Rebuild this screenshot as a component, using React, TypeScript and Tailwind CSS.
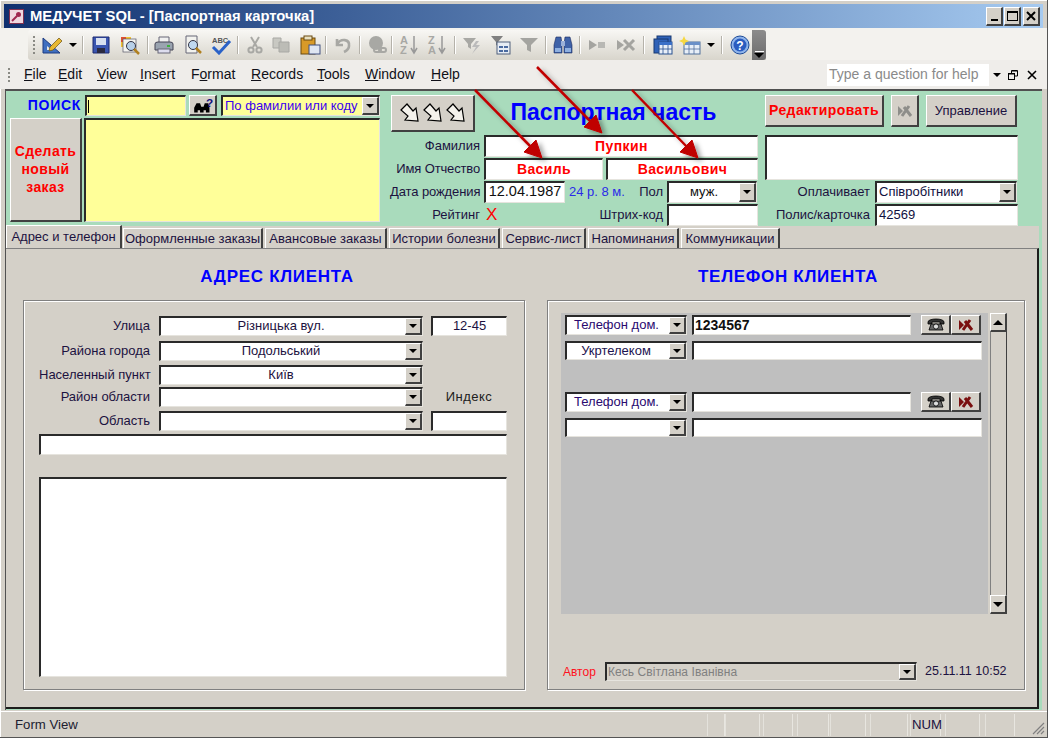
import React from "react";

const sunken =
  "border-t-2 border-l-2 border-r border-b border-t-[#2a2a2a] border-l-[#2a2a2a] border-r-[#e6e4de] border-b-[#e6e4de]";
const raised =
  "border-t border-l border-b-2 border-r-2 border-t-white border-l-white border-b-[#404040] border-r-[#404040] bg-[#d4d0c8]";
const etched = "border border-[#808080] shadow-[inset_1px_1px_0_#ffffff,1px_1px_0_#ffffff]";
const G = "#a8a8a4";

function Drop() {
  return (
    <div className={`${raised} w-[17px] shrink-0 self-stretch flex items-center justify-center`}>
      <div className="w-0 h-0 border-l-[4px] border-r-[4px] border-t-[4px] border-l-transparent border-r-transparent border-t-black" />
    </div>
  );
}

function Combo({ w, text, cls = "", bg = "bg-white", left = false }: { w: string; text?: string; cls?: string; bg?: string; left?: boolean }) {
  return (
    <div className={`${sunken} ${w} ${bg} h-full flex shrink-0`}>
      <div className={`flex-1 min-w-0 flex items-center whitespace-nowrap pb-[1px] ${left ? "pl-[2px]" : "justify-center"} ${cls}`}>{text}</div>
      <Drop />
    </div>
  );
}

function Field({ w, text, cls = "", left = false }: { w: string; text?: string; cls?: string; left?: boolean }) {
  return (
    <div className={`${sunken} ${w} bg-white h-full flex items-center shrink-0 whitespace-nowrap pb-[1px] ${left ? "pl-[1px]" : "justify-center"} ${cls}`}>{text}</div>
  );
}

function Label({ w, text, cls = "" }: { w: string; text: string; cls?: string }) {
  return <div className={`${w} text-right shrink-0 whitespace-nowrap text-[#1c1240] ${cls}`}>{text}</div>;
}

function DelIcon({ color }: { color: string }) {
  return (
    <svg width="16" height="14" viewBox="0 0 16 14">
      <path d="M1 2 L6 7 L1 12 Z" fill={color} />
      <path d="M5 12 L12 2 M7 3 L14 12" stroke={color} strokeWidth="3" fill="none" />
    </svg>
  );
}

function PhoneIcon() {
  return (
    <svg width="18" height="15" viewBox="0 0 18 15">
      <path d="M1 5 C1 1 17 1 17 5 L17 7 L13 7 L13 5 L5 5 L5 7 L1 7 Z" fill="#333" stroke="#000" strokeWidth="0.8" />
      <path d="M4 7 L14 7 L16 13 L2 13 Z" fill="#666" stroke="#000" strokeWidth="0.8" />
      <circle cx="9" cy="9.5" r="2.6" fill="#ddd" stroke="#000" strokeWidth="0.8" />
    </svg>
  );
}

function BlockArrow() {
  return (
    <svg width="20" height="20" viewBox="0 0 20 20">
      <path d="M1 7 L7 1 L13 8 L16 5 L18 18 L5 17 L8 13 Z" fill="#f4f2ec" stroke="#000" strokeWidth="1.2" />
    </svg>
  );
}

function Sep() {
  return <div className="w-[1px] h-[18px] bg-[#b5b2aa] shadow-[1px_0_0_#ffffff] shrink-0" />;
}

function Ic({ w, children }: { w: string; children: React.ReactNode }) {
  return <div className={`${w} shrink-0 flex items-center justify-center`}>{children}</div>;
}

const S = ({ children, w = 20 }: { children: React.ReactNode; w?: number }) => (
  <svg width={w} height="20" viewBox={`0 0 ${w} 20`}>{children}</svg>
);

const SmallDown = () => <div className="w-0 h-0 border-l-[4px] border-r-[4px] border-t-[4px] border-l-transparent border-r-transparent border-t-black" />;

function Toolbar() {
  return (
    <div className="ml-[28px] mt-[2px] h-[30px] w-[738px] flex rounded-l-[3px] bg-gradient-to-b from-[#f8f7f4] to-[#d8d5cc]">
      <div className="flex-1 flex items-center">
        <div className="ml-[5px] w-[2px] h-[18px] border-l-2 border-dotted border-[#8a8a84] shrink-0" />
        <Ic w="ml-[6px] w-[22px]"><S w={22}>
          <path d="M2 3 L2 18 L19 18 Z" fill="#3f6fc0" stroke="#1c3a80" /><path d="M6 11 L6 15 L11 15 Z" fill="#e8e8e4" />
          <path d="M9 12 L18 3 L21 6 L12 15 L8 16 Z" fill="#e8b830" stroke="#6a5010" strokeWidth="0.7" />
        </S></Ic>
        <Ic w="ml-[5px] w-[10px]"><SmallDown /></Ic>
        <div className="ml-[4px]"><Sep /></div>
        <Ic w="ml-[8px] w-[20px]"><S>
          <path d="M2 2 L18 2 L18 18 L2 18 Z" fill="#3a55b0" stroke="#1c2a70" /><rect x="5" y="3" width="10" height="7" fill="#d8e0f0" /><rect x="6" y="13" width="8" height="5" fill="#2a2a40" />
        </S></Ic>
        <Ic w="ml-[8px] w-[22px]"><S w={22}>
          <rect x="2" y="2" width="5" height="5" fill="#e05030" /><rect x="7" y="2" width="5" height="5" fill="#f0c030" /><rect x="2" y="7" width="5" height="5" fill="#f0c030" />
          <rect x="4" y="4" width="13" height="13" fill="#f4f4f0" stroke="#556" strokeWidth="0.7" /><circle cx="12" cy="11" r="4.5" fill="#b8d0e8" stroke="#334" /><path d="M15 14 L20 19" stroke="#b08020" strokeWidth="2.5" />
        </S></Ic>
        <div className="ml-[6px]"><Sep /></div>
        <Ic w="ml-[6px] w-[20px]"><S>
          <path d="M5 2 L15 2 L15 8 L5 8 Z" fill="#f0f0f0" stroke="#667" /><path d="M1 9 Q1 7 4 7 L16 7 Q19 7 19 9 L19 15 L1 15 Z" fill="#9aa4b0" stroke="#445" /><rect x="4" y="14" width="12" height="4" fill="#dde" stroke="#667" /><rect x="13" y="10" width="3" height="2" fill="#40b040" />
        </S></Ic>
        <Ic w="ml-[9px] w-[20px]"><S>
          <path d="M3 1 L14 1 L14 18 L3 18 Z" fill="#f2f2ee" stroke="#667" /><circle cx="10" cy="10" r="4.5" fill="#c0d8f0" stroke="#334" /><path d="M13 13 L18 18" stroke="#b08020" strokeWidth="2.5" />
        </S></Ic>
        <Ic w="ml-[7px] w-[22px]"><svg width="22" height="20" viewBox="0 0 22 20">
          <text x="2" y="8" fontSize="7.5" fontWeight="700" fill="#555" fontFamily="Liberation Sans, Arial, sans-serif">ABC</text>
          <path d="M3 12 L9 18 L20 6" fill="none" stroke="#2a62c8" strokeWidth="3" />
        </svg></Ic>
        <div className="ml-[5px]"><Sep /></div>
        <Ic w="ml-[8px] w-[18px]"><S w={18}>
          <path d="M5 2 L11 12 M13 2 L7 12" stroke={G} strokeWidth="2" /><circle cx="5" cy="15" r="2.6" fill="none" stroke={G} strokeWidth="2" /><circle cx="13" cy="15" r="2.6" fill="none" stroke={G} strokeWidth="2" />
        </S></Ic>
        <Ic w="ml-[7px] w-[20px]"><S>
          <path d="M2 3 L10 3 L10 13 L2 13 Z" fill="#c8c8c2" stroke={G} /><path d="M8 7 L18 7 L18 17 L8 17 Z" fill="#bcbcb6" stroke={G} />
        </S></Ic>
        <Ic w="ml-[8px] w-[22px]"><S w={22}>
          <rect x="2" y="3" width="14" height="16" fill="#d89a28" stroke="#6a4a10" /><rect x="5" y="1" width="8" height="4" fill="#e8e0c0" stroke="#6a4a10" /><rect x="10" y="10" width="11" height="9" fill="#dfe6f2" stroke="#405080" />
        </S></Ic>
        <div className="ml-[4px]"><Sep /></div>
        <Ic w="ml-[7px] w-[20px]"><S>
          <path d="M4 4 L4 10 L10 10 M4 9 C8 3 17 4 16 11 C16 14 13 16 11 17" fill="none" stroke={G} strokeWidth="2.6" />
        </S></Ic>
        <div className="ml-[6px]"><Sep /></div>
        <Ic w="ml-[6px] w-[22px]"><S w={22}>
          <circle cx="10" cy="8" r="7" fill={G} /><rect x="8" y="13" width="7" height="4" rx="2" fill="none" stroke={G} strokeWidth="2" /><rect x="13" y="13" width="7" height="4" rx="2" fill="none" stroke={G} strokeWidth="2" />
        </S></Ic>
        <div className="ml-[3px]"><Sep /></div>
        <Ic w="ml-[7px] w-[20px]"><svg width="20" height="22" viewBox="0 0 20 22">
          <text x="1" y="10" fontSize="11" fontWeight="700" fill={G} fontFamily="Liberation Sans, Arial, sans-serif">A</text>
          <text x="1" y="20" fontSize="11" fontWeight="700" fill={G} fontFamily="Liberation Sans, Arial, sans-serif">Z</text>
          <path d="M15 2 L15 18 M12 14 L15 19 L18 14" stroke="#999" strokeWidth="1.5" fill="none" />
        </svg></Ic>
        <Ic w="ml-[8px] w-[20px]"><svg width="20" height="22" viewBox="0 0 20 22">
          <text x="1" y="10" fontSize="11" fontWeight="700" fill={G} fontFamily="Liberation Sans, Arial, sans-serif">Z</text>
          <text x="1" y="20" fontSize="11" fontWeight="700" fill={G} fontFamily="Liberation Sans, Arial, sans-serif">A</text>
          <path d="M15 2 L15 18 M12 14 L15 19 L18 14" stroke="#999" strokeWidth="1.5" fill="none" />
        </svg></Ic>
        <div className="ml-[7px]"><Sep /></div>
        <Ic w="ml-[7px] w-[20px]"><S>
          <path d="M1 3 L14 3 L9 9 L9 14 L6 12 L6 9 Z" fill={G} /><path d="M14 6 L10 12 L14 12 L10 19 L18 10 L14 10 L17 6 Z" fill="#bbb" />
        </S></Ic>
        <Ic w="ml-[8px] w-[22px]"><S w={22}>
          <path d="M1 1 L13 1 L8 7 L8 11 L6 10 L6 7 Z" fill="#808080" /><rect x="7" y="7" width="13" height="12" fill="#e6ecf4" stroke="#50607c" /><rect x="9" y="11" width="4" height="2" fill="#4a6aa0" /><rect x="14" y="11" width="4" height="2" fill="#4a6aa0" /><rect x="9" y="15" width="4" height="2" fill="#4a6aa0" /><rect x="14" y="15" width="4" height="2" fill="#4a6aa0" />
        </S></Ic>
        <Ic w="ml-[7px] w-[20px]"><S>
          <path d="M1 3 L19 3 L12 10 L12 17 L8 15 L8 10 Z" fill="#a4a4a0" />
        </S></Ic>
        <div className="ml-[6px]"><Sep /></div>
        <Ic w="ml-[7px] w-[20px]"><S>
          <path d="M3 2 L8 2 L9 9 L9 18 L1 18 L1 10 Z" fill="#3f62a8" stroke="#1c2c60" strokeWidth="0.6" /><path d="M17 2 L12 2 L11 9 L11 18 L19 18 L19 10 Z" fill="#3f62a8" stroke="#1c2c60" strokeWidth="0.6" /><rect x="8" y="6" width="4" height="5" fill="#9ab0d8" /><rect x="2" y="13" width="6" height="4" fill="#8fb0e0" /><rect x="12" y="13" width="6" height="4" fill="#8fb0e0" />
        </S></Ic>
        <div className="ml-[6px]"><Sep /></div>
        <Ic w="ml-[7px] w-[20px]"><S>
          <path d="M2 5 L10 10 L2 15 Z" fill="#a4a4a0" /><rect x="11" y="7" width="7" height="6" fill="#b8b8b4" />
        </S></Ic>
        <Ic w="ml-[8px] w-[22px]"><S w={22}>
          <path d="M2 5 L9 10 L2 15 Z" fill="#a4a4a0" /><path d="M9 5 L19 15 M19 5 L9 15" stroke="#a4a4a0" strokeWidth="3" />
        </S></Ic>
        <div className="ml-[6px]"><Sep /></div>
        <Ic w="ml-[7px] w-[22px]"><S w={22}>
          <rect x="6" y="1" width="14" height="14" fill="#2f62b8" stroke="#183870" /><rect x="3" y="4" width="14" height="14" fill="#2f62b8" stroke="#183870" /><rect x="8" y="7" width="13" height="12" fill="#e8eff8" stroke="#285090" /><rect x="8" y="7" width="13" height="3" fill="#3a70c8" /><path d="M12 10 L12 19 M17 10 L17 19 M8 14 L21 14" stroke="#285090" strokeWidth="0.8" />
        </S></Ic>
        <Ic w="ml-[6px] w-[22px]"><S w={22}>
          <rect x="5" y="7" width="16" height="12" fill="#e8eff8" stroke="#50709c" /><rect x="5" y="7" width="16" height="3" fill="#6a90c8" /><path d="M10 10 L10 19 M15 10 L15 19 M5 14 L21 14" stroke="#50709c" strokeWidth="0.8" /><path d="M5 1 L6.5 4.5 L10 6 L6.5 7.5 L5 11 L3.5 7.5 L0 6 L3.5 4.5 Z" fill="#f6d840" />
        </S></Ic>
        <Ic w="ml-[5px] w-[9px]"><SmallDown /></Ic>
        <div className="ml-[6px]"><Sep /></div>
        <Ic w="ml-[8px] w-[20px]"><S>
          <circle cx="10" cy="10" r="9" fill="#8fb4ea" stroke="#1c4a98" /><circle cx="10" cy="10" r="6.5" fill="#2a5cc0" /><text x="10" y="14.5" textAnchor="middle" fontSize="12" fontWeight="700" fill="#ffffff" fontFamily="Liberation Sans, Arial, sans-serif">?</text>
        </S></Ic>
      </div>
      <div className="w-[14px] shrink-0 rounded-r-[3px] bg-gradient-to-b from-[#8c8c8c] to-[#6c6c6c] flex flex-col items-center justify-end pb-[2px]">
        <div className="w-[9px] h-[1px] bg-white mb-[1px]" />
        <div className="w-0 h-0 border-l-[5px] border-r-[5px] border-t-[5px] border-l-transparent border-r-transparent border-t-black" />
      </div>
    </div>
  );
}

function Mn({ a = "", u, b, w }: { a?: string; u: string; b: string; w: string }) {
  return (
    <span className={`${w} whitespace-nowrap`}>
      {a}<span className="underline">{u}</span>{b}
    </span>
  );
}

const tabs: [string, string][] = [
  ["Оформленные заказы", "w-[140px]"],
  ["Авансовые заказы", "w-[122px]"],
  ["Истории болезни", "w-[111px]"],
  ["Сервис-лист", "w-[84px]"],
  ["Напоминания", "w-[91px]"],
  ["Коммуникации", "w-[99px]"],
];

const statusCells = ["w-[18px]", "w-[35px]", "ml-[3px] w-[30px]", "ml-[4px] w-[32px]", "ml-[1px] w-[36px]", "ml-[4px] w-[38px]", "ml-[2px] w-[31px]", "ml-[4px] w-[35px]", "ml-[5px] w-[30px]"];

export default function App() {
  return (
    <div className="relative w-[1048px] h-[738px] overflow-hidden bg-[#d4d0c8] [font-family:Liberation_Sans,Arial,sans-serif] text-[13px] text-black flex flex-col pt-[4px] border-b border-r border-[#555] shadow-[inset_1px_1px_0_#ffffff]">
      {/* title bar */}
      <div className="mx-[4px] h-[24px] shrink-0 flex items-center bg-gradient-to-r from-[#10306f] to-[#a6caf0]">
        <div className="ml-[5px] w-[15px] h-[15px] bg-[#f0d8e0] border border-[#803050] flex items-center justify-center">
          <svg width="11" height="11" viewBox="0 0 11 11"><circle cx="7.5" cy="3.5" r="2.5" fill="#a02850" /><path d="M6 5 L1 10" stroke="#a02850" strokeWidth="2" /></svg>
        </div>
        <div className="ml-[6px] text-white font-bold text-[14.8px] whitespace-nowrap">МЕДУЧЕТ SQL - [Паспортная карточка]</div>
        <div className="ml-auto mr-[3px] flex items-center">
          <div className={`${raised} w-[17px] h-[19px] flex items-end justify-center pb-[3px]`}><div className="w-[7px] h-[2px] bg-black" /></div>
          <div className={`${raised} ml-[1px] w-[17px] h-[19px] flex items-center justify-center`}><div className="w-[11px] h-[10px] border border-black border-t-2" /></div>
          <div className={`${raised} ml-[2px] w-[17px] h-[19px] flex items-center justify-center`}>
            <svg width="10" height="10" viewBox="0 0 10 10"><path d="M1 1 L9 9 M9 1 L1 9" stroke="#000" strokeWidth="2" /></svg>
          </div>
        </div>
      </div>

      {/* toolbar */}
      <div className="h-[32px] shrink-0 bg-[#f3f2ee]">
        <Toolbar />
      </div>

      {/* menu */}
      <div className="h-[29px] shrink-0 bg-[#efedea] flex items-center text-[14px] text-[#101018]">
        <div className="ml-[8px] w-[2px] h-[14px] border-l-2 border-dotted border-[#8a8a84]" />
        <div className="ml-[14px] flex">
          <Mn w="w-[34px]" u="F" b="ile" />
          <Mn w="w-[39px]" u="E" b="dit" />
          <Mn w="w-[43px]" u="V" b="iew" />
          <Mn w="w-[51px]" u="I" b="nsert" />
          <Mn w="w-[60px]" a="F" u="o" b="rmat" />
          <Mn w="w-[66px]" u="R" b="ecords" />
          <Mn w="w-[48px]" u="T" b="ools" />
          <Mn w="w-[66px]" u="W" b="indow" />
          <Mn w="w-[30px]" u="H" b="elp" />
        </div>
        <div className="ml-auto w-[162px] h-[22px] bg-white flex items-center pl-[2px] text-[#8a8a8a] text-[14px] whitespace-nowrap">Type a question for help</div>
        <div className="ml-[2px] w-[12px] flex justify-center"><div className="w-0 h-0 border-l-[4px] border-r-[4px] border-t-[4px] border-l-transparent border-r-transparent border-t-black" /></div>
        <svg className="ml-[5px]" width="10" height="10" viewBox="0 0 10 10"><path d="M3.5 3 L3.5 0.5 L9.5 0.5 L9.5 6 L7 6" fill="none" stroke="#000" /><rect x="0.5" y="3.5" width="6" height="6" fill="none" stroke="#000" /><path d="M1 4 L6 4 M4 1 L9 1" stroke="#000" /></svg>
        <svg className="ml-[9px] mr-[10px]" width="10" height="10" viewBox="0 0 10 10"><path d="M1 1 L9 9 M9 1 L1 9" stroke="#000" strokeWidth="1.6" /></svg>
      </div>

      {/* form */}
      <div className="ml-[5px] mr-[5px] h-[621px] shrink-0 flex flex-col bg-[#a9dbbc] border-t-2 border-l border-t-[#505050] border-l-[#505050]">
        {/* header */}
        <div className="h-[135px] shrink-0 flex pt-[4px] text-[13px]">
          {/* col 1 */}
          <div className="ml-[4px] w-[370px] shrink-0 flex flex-col">
            <div className="h-[21px] flex">
              <div className="w-[71px] text-right font-bold text-[14px] text-[#0000ff] leading-[21px] tracking-[0.7px] whitespace-nowrap">ПОИСК</div>
              <div className={`${sunken} ml-[4px] w-[101px] bg-[#ffff99] flex items-center pl-[1px]`}><div className="w-[1px] h-[13px] bg-black" /></div>
              <div className={`${raised} ml-[3px] w-[28px] flex items-center justify-center`}>
                <svg width="20" height="17" viewBox="0 0 17 14">
                  <path d="M1 13 L1 9 L3 5 L6 5 L7 8 L9 8 L9 13 L6 13 L6 11 L4 11 L4 13 Z M9 8 L10 5 L13 5 L14 9 L14 13 L11 13 L11 11 L9 11 Z" fill="#000" />
                  <text x="11" y="8" fontSize="10" fontWeight="700" fill="#101080" fontFamily="Liberation Sans, Arial, sans-serif">?</text>
                </svg>
              </div>
              <div className="ml-[4px]">
                <Combo w="w-[159px]" text="По фамилии или коду" cls="text-[#3a00f0]" bg="bg-[#ffff99]" left />
              </div>
            </div>
            <div className="mt-[2px] h-[104px] flex">
              <div className={`${raised} w-[72px] pb-[2px] flex items-center justify-center text-center font-bold text-[14px] text-[#ff0000] leading-[18px] tracking-[0.4px]`}>
                Сделать<br />новый<br />заказ
              </div>
              <div className={`${sunken} ml-[2px] flex-1 bg-[#ffff99]`} />
            </div>
          </div>

          {/* col 2 */}
          <div className="ml-[10px] w-[368px] shrink-0 flex flex-col">
            <div className="h-[40px] flex items-start">
              <div className={`${raised} ml-[1px] w-[84px] h-[37px] flex items-center justify-center gap-[3px]`}>
                <BlockArrow /><BlockArrow /><BlockArrow />
              </div>
              <div className="flex-1 text-center font-bold text-[23px] text-[#0000ff] leading-[34px] pr-[6px] whitespace-nowrap">Паспортная часть</div>
            </div>
            <div className="h-[22px] flex items-center">
              <Label w="w-[90px]" text="Фамилия" />
              <div className="ml-[4px] h-full"><Field w="w-[274px]" text="Пупкин" cls="font-bold text-[14px] text-[#ff0000] tracking-[0.4px]" /></div>
            </div>
            <div className="mt-[1px] h-[22px] flex items-center">
              <Label w="w-[90px]" text="Имя Отчество" cls="tracking-[-0.15px]" />
              <div className="ml-[4px] h-full"><Field w="w-[119px]" text="Василь" cls="font-bold text-[14px] text-[#ff0000] tracking-[0.4px]" /></div>
              <div className="ml-[3px] h-full"><Field w="w-[152px]" text="Васильович" cls="font-bold text-[14px] text-[#ff0000] tracking-[0.4px]" /></div>
            </div>
            <div className="mt-[1px] h-[22px] flex items-center">
              <Label w="w-[90px]" text="Дата рождения" cls="tracking-[-0.1px]" />
              <div className="ml-[4px] h-full"><Field w="w-[81px]" text="12.04.1987" cls="text-[14.5px] text-[#101010]" /></div>
              <div className="ml-[4px] w-[60px] text-[#2a2ae8] whitespace-nowrap">24 р. 8 м.</div>
              <div className="w-[34px] text-right text-[#1c1240]">Пол</div>
              <div className="ml-[4px] h-full"><Combo w="w-[90px]" text="муж." cls="text-[#101010]" /></div>
            </div>
            <div className="mt-[1px] h-[22px] flex items-center">
              <Label w="w-[90px]" text="Рейтинг" />
              <div className="ml-[6px] w-[28px] text-[#ff0000] text-[17px] leading-[20px]">X</div>
              <div className="ml-[80px] w-[85px] text-right text-[#1c1240]">Штрих-код</div>
              <div className="ml-[4px] h-full"><Field w="w-[91px]" /></div>
            </div>
          </div>

          {/* col 3 */}
          <div className="ml-[7px] w-[253px] shrink-0 flex flex-col">
            <div className="h-[32px] flex">
              <div className={`${raised} w-[119px] flex items-center justify-center font-bold text-[14px] text-[#ff0000] tracking-[0.4px]`}>Редактировать</div>
              <div className={`${raised} ml-[7px] w-[28px] flex items-center justify-center`}><DelIcon color="#8e8e8a" /></div>
              <div className={`${raised} ml-[7px] w-[91px] flex items-center justify-center text-[#1c1240]`}>Управление</div>
            </div>
            <div className={`${sunken} mt-[8px] h-[45px] bg-white`} />
            <div className="mt-[1px] h-[22px] flex items-center">
              <Label w="w-[105px]" text="Оплачивает" />
              <div className="ml-[5px] h-full"><Combo w="w-[142px]" text="Співробітники" cls="text-[#101040]" left /></div>
            </div>
            <div className="mt-[1px] h-[22px] flex items-center">
              <Label w="w-[105px]" text="Полис/карточка" />
              <div className="ml-[5px] h-full"><Field w="w-[143px]" text="42569" cls="text-[#101040] pl-[2px]" left /></div>
            </div>
          </div>
        </div>

        {/* tab strip and page */}
        <div className="flex-1 mr-[3px] mb-[1px] flex flex-col bg-[#d4d0c8]">
          <div className="h-[22px] shrink-0 flex items-end">
            <div className="w-[116px] h-[23px] -mt-[1px] flex items-center justify-center border-t border-l border-t-white border-l-white border-r-2 border-r-[#404040] bg-[#d4d0c8] text-[#1c1240] whitespace-nowrap">Адрес и телефон</div>
            {tabs.map(([t, w], i) => (
              <div key={t} className={`${w} ${i === 0 ? "ml-[1px]" : "ml-[2px]"} h-[20px] flex items-center justify-center border-t border-l border-t-white border-l-white border-r-2 border-r-[#404040] bg-[#d4d0c8] text-[#1c1240] whitespace-nowrap`}>{t}</div>
            ))}
          </div>
          <div className="flex-1 flex flex-col border-t border-t-[#808080] border-r-2 border-r-[#1c1c1c] border-b-2 border-b-[#1c1c1c]">
            <div className="h-[51px] shrink-0 flex font-bold text-[17px] tracking-[0.7px] text-[#0000ff] leading-[55px]">
              <div className="ml-[17px] w-[502px] pl-[6px] text-center">АДРЕС КЛИЕНТА</div>
              <div className="ml-[22px] w-[478px] pl-[4px] text-center">ТЕЛЕФОН КЛИЕНТА</div>
            </div>
            <div className="h-[390px] shrink-0 flex">
              {/* address */}
              <div className={`${etched} ml-[17px] w-[502px] pt-[15px] pl-[15px] flex flex-col`}>
                <div className="h-[20px] flex items-center">
                  <Label w="w-[111px]" text="Улица" />
                  <div className="ml-[9px] h-full"><Combo w="w-[264px]" text="Різницька вул." cls="text-[#1c1240] pr-[4px]" /></div>
                  <div className="ml-[8px] h-full"><Field w="w-[76px]" text="12-45" cls="text-[#1c1240]" /></div>
                </div>
                <div className="mt-[5px] h-[20px] flex items-center">
                  <Label w="w-[111px]" text="Района города" />
                  <div className="ml-[9px] h-full"><Combo w="w-[264px]" text="Подольський" cls="text-[#1c1240] pr-[4px]" /></div>
                </div>
                <div className="mt-[4px] h-[20px] flex items-center">
                  <Label w="w-[111px]" text="Населенный пункт" />
                  <div className="ml-[9px] h-full"><Combo w="w-[264px]" text="Київ" cls="text-[#1c1240] pr-[4px]" /></div>
                </div>
                <div className="mt-[2px] h-[20px] flex items-center">
                  <Label w="w-[111px]" text="Район области" />
                  <div className="ml-[9px] h-full"><Combo w="w-[264px]" /></div>
                  <div className="ml-[8px] w-[76px] text-center text-[#202020] tracking-[0.5px]">Индекс</div>
                </div>
                <div className="mt-[4px] h-[20px] flex items-center">
                  <Label w="w-[111px]" text="Область" />
                  <div className="ml-[9px] h-full"><Combo w="w-[264px]" /></div>
                  <div className="ml-[8px] h-full"><Field w="w-[76px]" /></div>
                </div>
                <div className={`${sunken} mt-[3px] w-[468px] h-[21px] bg-white`} />
                <div className={`${sunken} mt-[22px] w-[468px] h-[200px] bg-white`} />
              </div>

              {/* phone */}
              <div className={`${etched} ml-[22px] w-[478px] pt-[12px] pl-[13px] flex flex-col`}>
                <div className="h-[301px] flex">
                  <div className="w-[427px] bg-[#bfbfbf] pt-[2px] pl-[4px] flex flex-col">
                    <div className="h-[20px] flex">
                      <Combo w="w-[122px]" text="Телефон дом." cls="text-[#2a0a70] pr-[3px]" />
                      <div className="ml-[5px]"><Field w="w-[219px]" text="1234567" cls="font-bold text-[14px] text-[#101010]" left /></div>
                      <div className={`${raised} ml-[10px] w-[30px] flex items-center justify-center`}><PhoneIcon /></div>
                      <div className={`${raised} w-[30px] flex items-center justify-center`}><DelIcon color="#7a1010" /></div>
                    </div>
                    <div className="mt-[6px] h-[19px] flex">
                      <Combo w="w-[122px]" text="Укртелеком" cls="text-[#1c1250] pr-[4px]" />
                      <div className="ml-[5px]"><Field w="w-[290px]" /></div>
                    </div>
                    <div className="mt-[32px] h-[20px] flex">
                      <Combo w="w-[122px]" text="Телефон дом." cls="text-[#2a0a70] pr-[3px]" />
                      <div className="ml-[5px]"><Field w="w-[219px]" /></div>
                      <div className={`${raised} ml-[10px] w-[30px] flex items-center justify-center`}><PhoneIcon /></div>
                      <div className={`${raised} w-[30px] flex items-center justify-center`}><DelIcon color="#7a1010" /></div>
                    </div>
                    <div className="mt-[6px] h-[19px] flex">
                      <Combo w="w-[122px]" />
                      <div className="ml-[5px]"><Field w="w-[290px]" /></div>
                    </div>
                  </div>
                  <div className="ml-[2px] w-[17px] flex flex-col">
                    <div className={`${raised} h-[19px] flex items-center justify-center`}><div className="w-0 h-0 border-l-[5px] border-r-[5px] border-b-[5px] border-l-transparent border-r-transparent border-b-black" /></div>
                    <div className="flex-1 border-r border-r-[#404040] border-l border-l-[#808080] bg-[#d4d0c8]" />
                    <div className={`${raised} h-[19px] flex items-center justify-center`}><div className="w-0 h-0 border-l-[5px] border-r-[5px] border-t-[5px] border-l-transparent border-r-transparent border-t-black" /></div>
                  </div>
                </div>
                <div className="mt-[48px] h-[19px] flex items-center">
                  <div className="ml-[2px] w-[42px] text-[12px] text-[#ff1020]">Автор</div>
                  <div className={`${sunken} w-[312px] h-full flex`}>
                    <div className="flex-1 pl-[1px] flex items-center text-[12px] tracking-[0.07px] text-[#808080] whitespace-nowrap">Кесь Світлана Іванівна</div>
                    <Drop />
                  </div>
                  <div className="ml-[8px] text-[12.5px] text-[#1c1240] whitespace-nowrap">25.11.11 10:52</div>
                </div>
              </div>
            </div>
          </div>
        </div>
      </div>

      {/* status bar */}
      <div className="mt-[1px] flex-1 flex items-center border-t border-t-white text-[13.2px] text-[#202030]">
        <div className="ml-[15px] w-[692px] whitespace-nowrap">Form View</div>
        {statusCells.map((w, i) => (
          <div key={w + i} className={`${w} h-[22px] flex items-center border-r border-l border-r-[#e8e6e0] border-l-[#e4e2dc] text-[#201040]`}>
            {i === 6 ? <span className="ml-[1px] whitespace-nowrap">NUM</span> : null}
          </div>
        ))}
        <svg className="ml-auto mr-[2px] self-end mb-[2px]" width="14" height="14" viewBox="0 0 14 14"><path d="M13 2 L2 13 M13 6 L6 13 M13 10 L10 13" stroke="#808080" strokeWidth="1.2" /></svg>
      </div>

      {/* annotation arrows */}
      <svg className="absolute left-0 top-0 pointer-events-none" width="1048" height="738" viewBox="0 0 1048 738">
        <defs>
          <filter id="sh" x="-20%" y="-20%" width="140%" height="140%"><feDropShadow dx="4" dy="3" stdDeviation="2.5" floodColor="#000" floodOpacity="0.35" /></filter>
        </defs>
        <g filter="url(#sh)" fill="#c00000" stroke="#c00000">
          <path d="M475 90 L532 148" strokeWidth="2.5" /><path d="M542 158 L524 152 L536 140 Z" />
          <path d="M537 67 L592 123" strokeWidth="2.5" /><path d="M602 133 L584 127 L596 115 Z" />
          <path d="M632 90 L688 148" strokeWidth="2.5" /><path d="M698 158 L680 152 L692 140 Z" />
        </g>
      </svg>
    </div>
  );
}
